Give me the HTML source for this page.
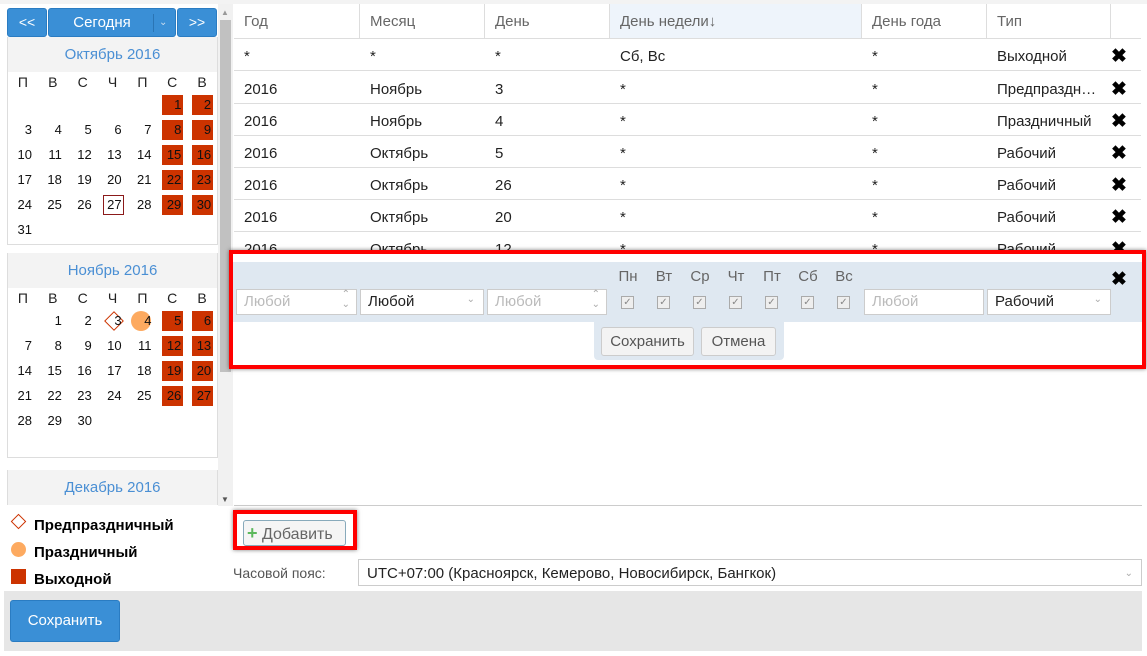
<!DOCTYPE html>
<html><head><meta charset="utf-8"><style>
*{box-sizing:border-box;margin:0;padding:0}
body{width:1147px;height:656px;background:#fff;font-family:"Liberation Sans",sans-serif;position:relative;overflow:hidden;color:#333}
.a{position:absolute}
.btn{position:absolute;background:#3a8fd6;border:1px solid #2a7cc2;border-radius:3px;color:#fff;font-size:15px;text-align:center}
.cal{position:absolute;left:7px;width:211px;border:1px solid #ddd;border-top:none;background:#fff}
.mh{height:35px;background:#f3f3f3;color:#4a8fd4;font-size:15px;text-align:center;line-height:35px}
.wd{display:flex;height:19px;font-size:14px;color:#222;margin-top:1px}
.wd span{width:30px;text-align:center;line-height:18px}
.row{display:flex;height:25px;padding-top:3px}
.row span{width:30px;height:25px;position:relative}
.row span i{position:absolute;left:5px;top:0;width:21px;height:20px;font-style:normal;font-size:13px;text-align:right;padding-right:2px;line-height:20px;color:#111}
.row span i.r{background:#cc3300;color:#111}
.row span i.t{border:1px solid #8b1a1a;padding-right:1px;line-height:18px}
.th{position:absolute;top:4px;height:34px;line-height:36px;font-size:15px;color:#666;padding-left:10px;border-right:1px solid #ddd}
.tr{position:absolute;left:234px;width:907px;height:32px;border-bottom:1px solid #ddd;font-size:15px;color:#222}
.tr span{position:absolute;top:2px;line-height:32px}
.x{font-size:19px;font-weight:bold;color:#000}
.inp{position:absolute;top:289px;height:26px;border:1px solid #ccc;background:#fff;font-size:15px;line-height:24px;padding-left:7px;color:#bbb}
.cb{position:absolute;top:296px;width:13px;height:13px;border:1px solid #aaa;background:#eee;font-size:10px;line-height:11px;text-align:center;color:#888}
.dl{position:absolute;top:268px;font-size:15px;color:#666;width:30px;text-align:center}
.gb{position:absolute;background:#f3f3f3;border:1px solid #ccc;border-radius:3px;font-size:15px;color:#555;text-align:center}
</style></head><body>
<div class="a" style="left:0;top:0;width:1147px;height:4px;background:#f3f3f3"></div>
<div class="btn" style="left:7px;top:8px;width:40px;height:29px;line-height:27px;font-size:14px">&lt;&lt;</div>
<div class="btn" style="left:48px;top:8px;width:128px;height:29px;line-height:27px;padding-right:20px">Сегодня<span class="a" style="left:104px;top:5px;height:18px;border-left:1px solid #2a75b5"></span><span class="a" style="left:110px;top:0;font-size:10px;color:#cde">&#8964;</span></div>
<div class="btn" style="left:177px;top:8px;width:40px;height:29px;line-height:27px;font-size:14px">&gt;&gt;</div>
<div class="a" style="left:0;top:37px;width:218px;height:468px;overflow:hidden">
<div class="cal" style="top:0;height:208px">
<div class="mh">Октябрь 2016</div>
<div class="wd"><span>П</span><span>В</span><span>С</span><span>Ч</span><span>П</span><span>С</span><span>В</span></div>
<div class="row"><span></span><span></span><span></span><span></span><span></span><span><i class="r">1</i></span><span><i class="r">2</i></span></div>
<div class="row"><span><i>3</i></span><span><i>4</i></span><span><i>5</i></span><span><i>6</i></span><span><i>7</i></span><span><i class="r">8</i></span><span><i class="r">9</i></span></div>
<div class="row"><span><i>10</i></span><span><i>11</i></span><span><i>12</i></span><span><i>13</i></span><span><i>14</i></span><span><i class="r">15</i></span><span><i class="r">16</i></span></div>
<div class="row"><span><i>17</i></span><span><i>18</i></span><span><i>19</i></span><span><i>20</i></span><span><i>21</i></span><span><i class="r">22</i></span><span><i class="r">23</i></span></div>
<div class="row"><span><i>24</i></span><span><i>25</i></span><span><i>26</i></span><span><i class="t">27</i></span><span><i>28</i></span><span><i class="r">29</i></span><span><i class="r">30</i></span></div>
<div class="row"><span><i>31</i></span></div>
</div>
<div class="cal" style="top:216px;height:205px">
<div class="mh">Ноябрь 2016</div>
<div class="wd"><span>П</span><span>В</span><span>С</span><span>Ч</span><span>П</span><span>С</span><span>В</span></div>
<div class="row"><span></span><span><i>1</i></span><span><i>2</i></span><span><b class="a" style="left:9px;top:3px;width:14px;height:14px;border:1px solid #cc3300;transform:rotate(45deg)"></b><i>3</i></span><span><b class="a" style="left:4px;top:0;width:20px;height:20px;border-radius:50%;background:#fdaa60"></b><i>4</i></span><span><i class="r">5</i></span><span><i class="r">6</i></span></div>
<div class="row"><span><i>7</i></span><span><i>8</i></span><span><i>9</i></span><span><i>10</i></span><span><i>11</i></span><span><i class="r">12</i></span><span><i class="r">13</i></span></div>
<div class="row"><span><i>14</i></span><span><i>15</i></span><span><i>16</i></span><span><i>17</i></span><span><i>18</i></span><span><i class="r">19</i></span><span><i class="r">20</i></span></div>
<div class="row"><span><i>21</i></span><span><i>22</i></span><span><i>23</i></span><span><i>24</i></span><span><i>25</i></span><span><i class="r">26</i></span><span><i class="r">27</i></span></div>
<div class="row"><span><i>28</i></span><span><i>29</i></span><span><i>30</i></span></div>
</div>
<div class="cal" style="top:433px;height:60px">
<div class="mh">Декабрь 2016</div>
<div class="wd"><span>П</span><span>В</span><span>С</span><span>Ч</span><span>П</span><span>С</span><span>В</span></div>
</div>
</div>
<div class="a" style="left:218px;top:4px;width:15px;height:502px;background:#f1f1f1"></div>
<div class="a" style="left:220px;top:20px;width:11px;height:352px;background:#c1c1c1"></div>
<div class="a" style="left:221px;top:8px;font-size:8px;color:#999">▲</div>
<div class="a" style="left:221px;top:495px;font-size:8px;color:#555">▼</div>
<div class="a" style="left:13px;top:516px;width:11px;height:11px;border:1px solid #cc3300;transform:rotate(45deg)"></div>
<div class="a" style="left:34px;top:517px;font-size:15px;font-weight:bold;color:#000">Предпраздничный</div>
<div class="a" style="left:11px;top:542px;width:15px;height:15px;border-radius:50%;background:#fdaa60"></div>
<div class="a" style="left:34px;top:544px;font-size:15px;font-weight:bold;color:#000">Праздничный</div>
<div class="a" style="left:11px;top:569px;width:15px;height:15px;background:#cc3300"></div>
<div class="a" style="left:34px;top:571px;font-size:15px;font-weight:bold;color:#000">Выходной</div>
<div class="th" style="left:234px;width:126px">Год</div>
<div class="th" style="left:360px;width:125px">Месяц</div>
<div class="th" style="left:485px;width:125px">День</div>
<div class="th" style="left:610px;width:252px;background:#eef4fb">День недели&#8595;</div>
<div class="th" style="left:862px;width:125px">День года</div>
<div class="th" style="left:987px;width:124px">Тип</div>
<div class="a" style="left:234px;top:38px;width:907px;border-top:1px solid #ddd"></div>
<div class="tr" style="top:39px"><span style="left:10px">*</span><span style="left:136px">*</span><span style="left:261px">*</span><span style="left:386px">Сб, Вс</span><span style="left:638px">*</span><span style="left:763px">Выходной</span><span class="x" style="left:877px">&#10006;</span></div>
<div class="tr" style="top:72px"><span style="left:10px">2016</span><span style="left:136px">Ноябрь</span><span style="left:261px">3</span><span style="left:386px">*</span><span style="left:638px">*</span><span style="left:763px">Предпраздн…</span><span class="x" style="left:877px">&#10006;</span></div>
<div class="tr" style="top:104px"><span style="left:10px">2016</span><span style="left:136px">Ноябрь</span><span style="left:261px">4</span><span style="left:386px">*</span><span style="left:638px">*</span><span style="left:763px">Праздничный</span><span class="x" style="left:877px">&#10006;</span></div>
<div class="tr" style="top:136px"><span style="left:10px">2016</span><span style="left:136px">Октябрь</span><span style="left:261px">5</span><span style="left:386px">*</span><span style="left:638px">*</span><span style="left:763px">Рабочий</span><span class="x" style="left:877px">&#10006;</span></div>
<div class="tr" style="top:168px"><span style="left:10px">2016</span><span style="left:136px">Октябрь</span><span style="left:261px">26</span><span style="left:386px">*</span><span style="left:638px">*</span><span style="left:763px">Рабочий</span><span class="x" style="left:877px">&#10006;</span></div>
<div class="tr" style="top:200px"><span style="left:10px">2016</span><span style="left:136px">Октябрь</span><span style="left:261px">20</span><span style="left:386px">*</span><span style="left:638px">*</span><span style="left:763px">Рабочий</span><span class="x" style="left:877px">&#10006;</span></div>
<div class="tr" style="top:232px;border:none"><span style="left:10px">2016</span><span style="left:136px">Октябрь</span><span style="left:261px">12</span><span style="left:386px">*</span><span style="left:638px">*</span><span style="left:763px">Рабочий</span><span class="x" style="left:877px">&#10006;</span></div>
<div class="a" style="left:229px;top:250px;width:917px;height:119px;background:#fff;border:4px solid #f00;box-shadow:0 0 4px rgba(0,0,0,.5)"></div>
<div class="a" style="left:233px;top:262px;width:909px;height:60px;background:#dfe8f1"></div>
<div class="a" style="left:594px;top:322px;width:190px;height:38px;background:#dfe8f1;border-radius:0 0 4px 4px"></div>
<div class="x a" style="left:1111px;top:268px">&#10006;</div>
<div class="inp" style="left:236px;width:121px">Любой<span class="a" style="right:6px;top:0;font-size:10px;line-height:10px;color:#aaa">&#8963;<br>&#8964;</span></div>
<div class="inp" style="left:360px;width:124px;color:#222">Любой<span class="a" style="right:8px;top:-2px;font-size:10px;color:#aaa">&#8964;</span></div>
<div class="inp" style="left:487px;width:120px">Любой<span class="a" style="right:6px;top:0;font-size:10px;line-height:10px;color:#aaa">&#8963;<br>&#8964;</span></div>
<div class="dl" style="left:613px">Пн</div><div class="dl" style="left:649px">Вт</div><div class="dl" style="left:685px">Ср</div><div class="dl" style="left:721px">Чт</div><div class="dl" style="left:757px">Пт</div><div class="dl" style="left:793px">Сб</div><div class="dl" style="left:829px">Вс</div>
<div class="cb" style="left:621px">&#10003;</div><div class="cb" style="left:657px">&#10003;</div><div class="cb" style="left:693px">&#10003;</div><div class="cb" style="left:729px">&#10003;</div><div class="cb" style="left:765px">&#10003;</div><div class="cb" style="left:801px">&#10003;</div><div class="cb" style="left:837px">&#10003;</div>
<div class="inp" style="left:864px;width:120px">Любой</div>
<div class="inp" style="left:987px;width:124px;color:#222">Рабочий<span class="a" style="right:8px;top:-2px;font-size:10px;color:#aaa">&#8964;</span></div>
<div class="gb" style="left:601px;top:327px;width:93px;height:29px;line-height:27px">Сохранить</div>
<div class="gb" style="left:701px;top:327px;width:75px;height:29px;line-height:27px">Отмена</div>
<div class="a" style="left:234px;top:505px;width:908px;border-top:1px solid #ccc"></div>
<div class="a" style="left:233px;top:510px;width:124px;height:40px;border:4px solid #f00;box-shadow:0 0 4px rgba(0,0,0,.5)"></div>
<div class="a" style="left:243px;top:520px;width:103px;height:26px;border:1px solid #8ab;border-radius:3px;background:#f5f5f5;font-size:16px;color:#666;line-height:24px;padding-left:3px"><span style="color:#5cb85c;font-weight:bold;font-size:18px">+</span> Добавить</div>
<div class="a" style="left:233px;top:565px;font-size:14px;color:#555">Часовой пояс:</div>
<div class="a" style="left:358px;top:559px;width:784px;height:27px;border:1px solid #ccc;font-size:15px;color:#222;line-height:27px;padding-left:8px">UTC+07:00 (Красноярск, Кемерово, Новосибирск, Бангкок)<span class="a" style="right:8px;top:0;font-size:10px;color:#aaa">&#8964;</span></div>
<div class="a" style="left:4px;top:591px;width:1138px;height:60px;background:#e6e6e6"></div>
<div class="btn" style="left:10px;top:600px;width:110px;height:42px;line-height:40px;font-size:15px">Сохранить</div>
</body></html>
